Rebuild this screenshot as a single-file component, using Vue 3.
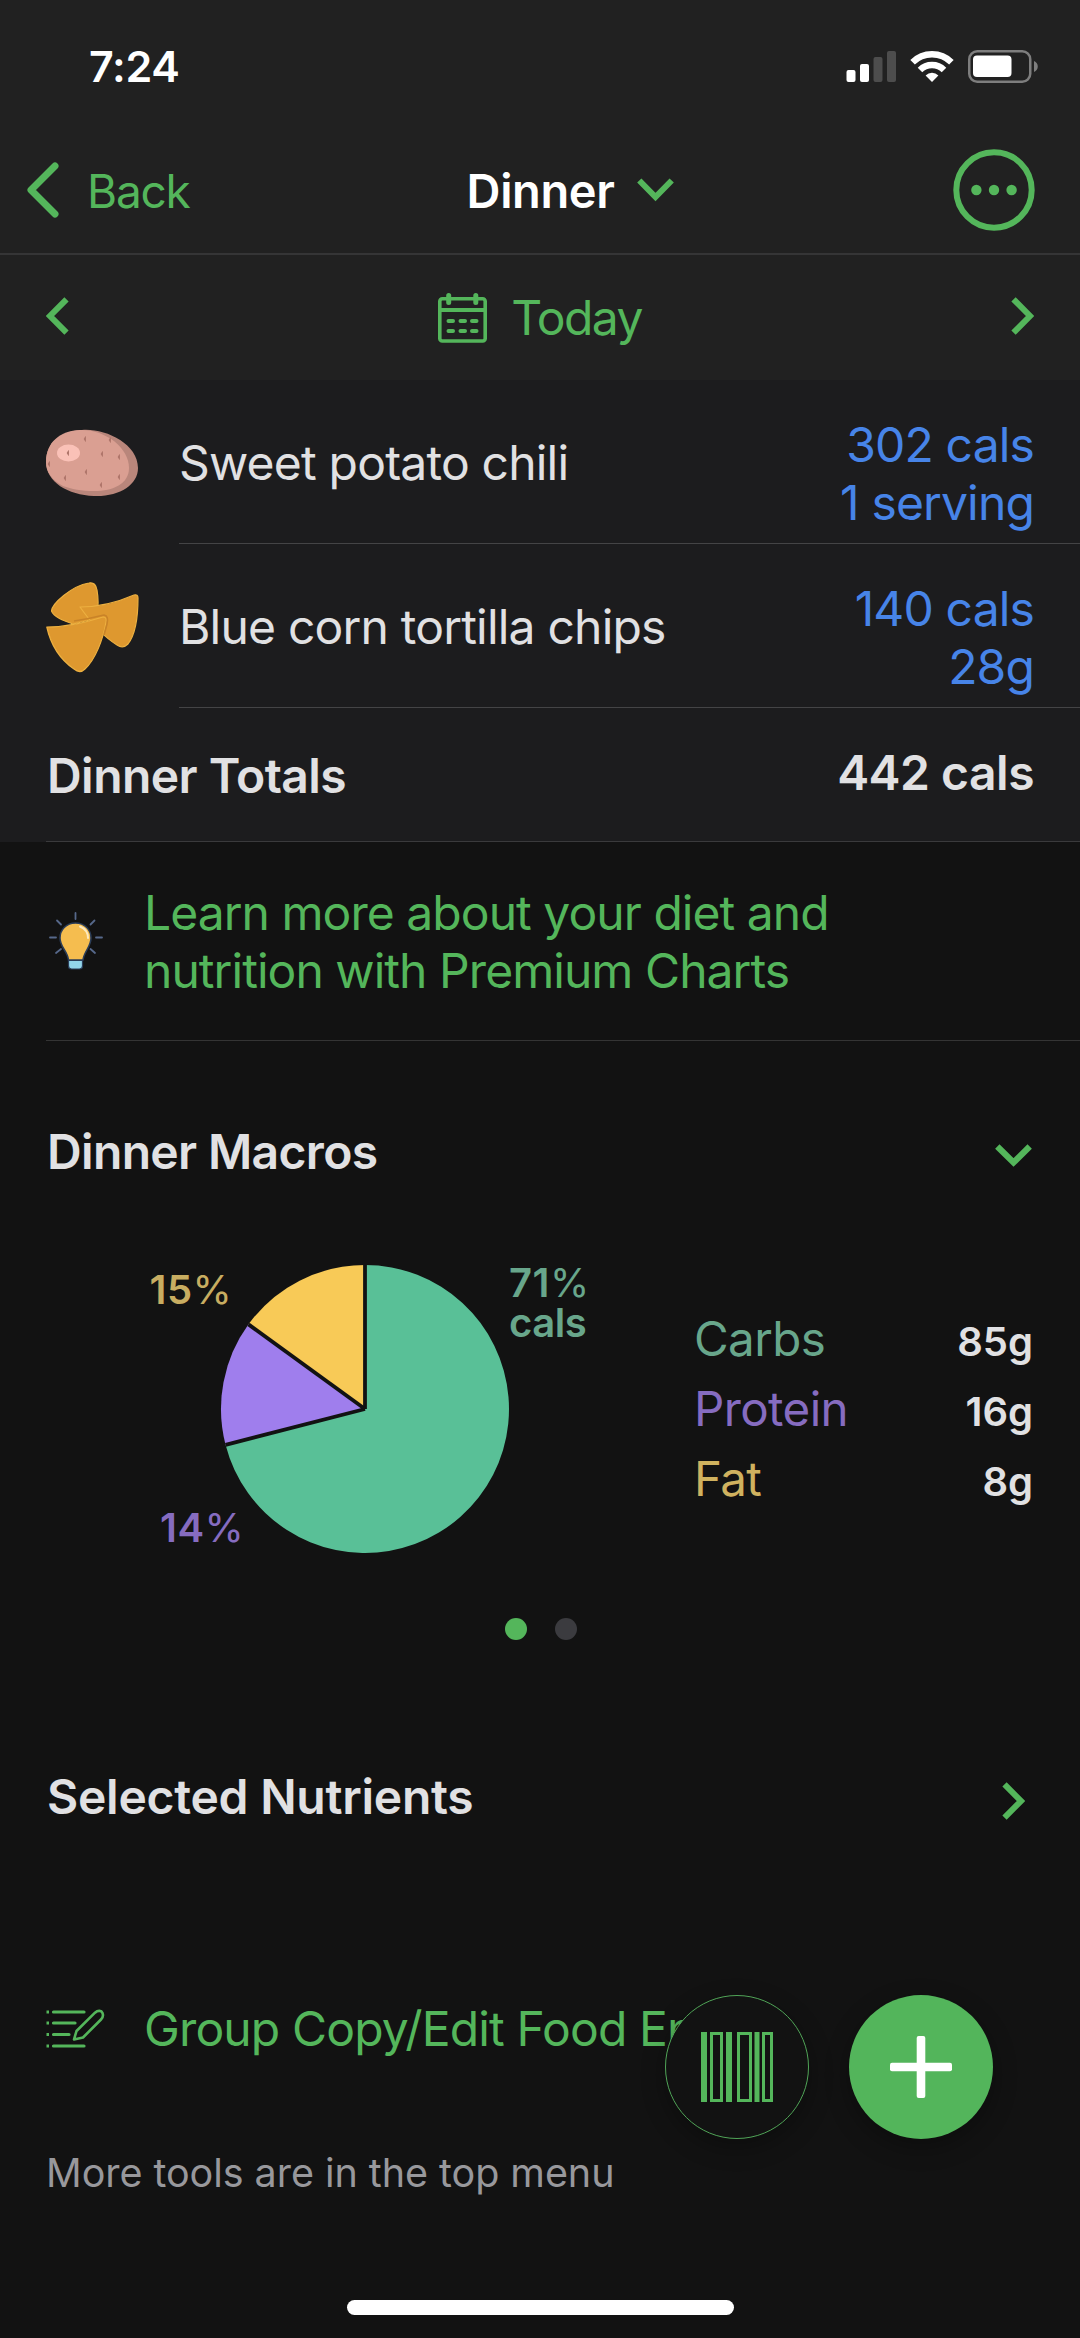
<template>
  <div class="screen">
    <header class="header">
      <div class="status-bar">
        <span class="time">7:24</span>
        <div class="status-icons">
          <svg width="50" height="32" viewBox="0 0 50 32">
            <rect x="0.5" y="20" width="9" height="12" rx="2" fill="#fff" />
            <rect x="14" y="14" width="9" height="18" rx="2" fill="#fff" />
            <rect x="27.5" y="7" width="9" height="25" rx="2" fill="#4d4d4d" />
            <rect x="41" y="1" width="9" height="31" rx="2" fill="#4d4d4d" />
          </svg>
          <svg width="44" height="32" viewBox="0 0 44 32">
            <g fill="none" stroke="#fff" stroke-width="6.4">
              <path d="M2.6 12.2 A27.5 27.5 0 0 1 41.4 12.2" />
              <path d="M10 20 A17 17 0 0 1 34 20" />
            </g>
            <path d="M22 32 L15.6 25.4 A9.2 9.2 0 0 1 28.4 25.4 Z" fill="#fff" />
          </svg>
          <svg width="71" height="33" viewBox="0 0 71 33">
            <rect x="1.25" y="1.25" width="61" height="30.5" rx="8" fill="none" stroke="#7e7e7e" stroke-width="2.5" />
            <rect x="5" y="5.5" width="38.5" height="21.5" rx="4" fill="#fff" />
            <path d="M66 11 C71 13 71 20 66 22 Z" fill="#7e7e7e" />
          </svg>
        </div>
      </div>

      <nav class="nav">
        <div class="back">
          <svg width="34" height="60" viewBox="0 0 34 60">
            <path d="M29 6 L5 30 L29 54" fill="none" stroke="#54b65b" stroke-width="7" stroke-linecap="round" stroke-linejoin="round" />
          </svg>
          <span class="back-label">Back</span>
        </div>
        <div class="title">
          <span class="title-label">Dinner</span>
          <svg width="37" height="24" viewBox="0 0 37 24">
            <path d="M2.3 2.5 L18.5 19 L34.7 2.5" fill="none" stroke="#54b65b" stroke-width="6" />
          </svg>
        </div>
        <svg class="more" width="82" height="82" viewBox="0 0 82 82">
          <circle cx="41" cy="41" r="37.7" fill="none" stroke="#54b65b" stroke-width="6" />
          <circle v-for="x in [23.4, 41, 58.6]" :key="x" :cx="x" cy="41" r="5.2" fill="#54b65b" />
        </svg>
      </nav>

      <div class="date-row">
        <svg class="day-arrow" width="23" height="38" viewBox="0 0 23 38">
          <path d="M20.5 2.3 L4 19 L20.5 35.7" fill="none" stroke="#54b65b" stroke-width="6" />
        </svg>
        <div class="today">
          <svg width="49" height="50" viewBox="0 0 49 50" fill="none" stroke="#54b65b">
            <rect x="1.8" y="5.8" width="45.4" height="42.2" rx="2.5" stroke-width="3.6" />
            <path d="M2 17 H47" stroke-width="4" />
            <path d="M10.7 2.5 V9.5 M37.8 2.5 V9.5" stroke-width="5" stroke-linecap="round" />
            <path d="M10.5 28 H15 M22.5 28 H27 M34 28 H38.5 M10.5 38 H15 M22.5 38 H27 M34 38 H38.5" stroke-width="4" stroke-linecap="round" />
          </svg>
          <span class="today-label">Today</span>
        </div>
        <svg class="day-arrow" width="23" height="38" viewBox="0 0 23 38">
          <path d="M2.5 2.3 L19 19 L2.5 35.7" fill="none" stroke="#54b65b" stroke-width="6" />
        </svg>
      </div>
    </header>

    <section class="foods">
      <div class="food" v-for="food in foods" :key="food.name">
        <div class="food-icon">
          <svg v-if="food.icon === 'potato'" width="93" height="68" viewBox="0 0 93 68">
            <path d="M36 1 C58 -1 92 14 92 39 C92 56 73 68 48 67 C22 66 0 53 0 33 C0 13 16 2 36 1 Z" fill="#b9867b" />
            <path d="M34 1 C58 0 83 18 83 39 C83 55 67 62 48 62 C36 62 25 60 17 57 C6 51 0 43 0 33 C0 13 14 2 34 1 Z" fill="#da9f92" />
            <ellipse cx="22.5" cy="24" rx="11.5" ry="8.5" fill="#fac1b7" />
            <path
              v-for="(s, i) in potatoSpots"
              :key="i"
              :d="`M${s[0] + 1} ${s[1] - 2.5} q-3.5 2.5 0 5`"
              fill="#b0766b"
              stroke="#b0766b"
              stroke-width="1"
            />
          </svg>
          <svg v-else class="chips" width="93" height="91" viewBox="0 0 93 91">
            <g fill="#de982f" stroke="#edb040" stroke-width="1.2" stroke-linejoin="round">
              <path d="M5.5 29 C6 22 25 4 43 1 C48 0 50 3 51 8 C53 20 52 31 48 37 L27 42 C16 38 8 35 5.5 29 Z" />
              <path d="M34 25 C56 25 72 20 88 13 Q92 12 92 16 C92 36 89 53 82 62 Q77 67 71 63 C58 55 46 42 34 25 Z" />
              <path d="M0.8 45 C22 45 40 40 57 35 Q61 35 60 40 C57 58 49 78 39 87 Q34 92 28 87 C15 78 5 64 0.8 45 Z" />
            </g>
            <path d="M28 39 Q42 37 58 33 Q63 34 61 42 L58 53" fill="none" stroke="#c98328" stroke-width="1.6" />
          </svg>
        </div>
        <div class="food-body">
          <span class="food-name">{{ food.name }}</span>
          <div class="food-amount">
            <div>{{ food.cals }}</div>
            <div>{{ food.amount }}</div>
          </div>
        </div>
      </div>
      <div class="totals">
        <span class="totals-label">Dinner Totals</span>
        <span class="totals-value">442 cals</span>
      </div>
    </section>

    <section class="premium">
      <svg width="54" height="58" viewBox="0 0 54 58">
        <path
          d="M26.5 1 V7 M8 8.5 L12 12.5 M45.5 8.5 L41.5 12.5 M1 25.5 H7 M47 25.5 H53 M7 41 L12 37 M46 41 L41.5 37"
          stroke="#56688a"
          stroke-width="1.8"
          stroke-linecap="round"
        />
        <path d="M26.5 11 C36 11 42 18 42 26 C42 35 35 39 34 48 H19.5 C18.5 39 11 35 11 26 C11 18 17 11 26.5 11 Z" fill="#f5bd4f" stroke="#2a3c57" stroke-width="1.5" />
        <path d="M31 14.5 C36 16.5 39 20 39 26" fill="none" stroke="#fdeac0" stroke-width="2" stroke-linecap="round" />
        <path d="M19.5 48.5 H33.5 V54 Q33.5 57 30.5 57 H22.5 Q19.5 57 19.5 54 Z" fill="#92d5ea" stroke="#2a3c57" stroke-width="1.2" />
      </svg>
      <p class="premium-text">Learn more about your diet and<br />nutrition with Premium Charts</p>
    </section>

    <section class="section-head macros-head">
      <h2 class="macros-title">Dinner Macros</h2>
      <svg class="chevron-down" width="37" height="24" viewBox="0 0 37 24">
        <path d="M2.3 2.5 L18.5 18.5 L34.7 2.5" fill="none" stroke="#54b65b" stroke-width="6.2" />
      </svg>
    </section>

    <section class="macros">
      <svg class="pie" width="600" height="296" viewBox="0 0 600 296">
        <path v-for="s in slices" :key="s.color" :d="s.path" :fill="s.color" />
        <path v-for="s in slices" :key="s.edge" :d="s.edge" stroke="#121212" stroke-width="3.8" />
        <g class="pie-text">
          <text x="149.5" y="43" fill="#c8ad61">15<tspan class="pct">%</tspan></text>
          <text x="160" y="281" fill="#866cc0">14<tspan class="pct">%</tspan></text>
          <text x="509" y="36" fill="#68a68b">71<tspan class="pct">%</tspan></text>
          <text x="509" y="76" fill="#68a68b" class="cals">cals</text>
        </g>
      </svg>
      <ul class="legend">
        <li v-for="m in macros" :key="m.name">
          <span :class="['macro-name', m.name.toLowerCase()]">{{ m.name }}</span>
          <span class="macro-grams">{{ m.grams }}</span>
        </li>
      </ul>
    </section>

    <div class="pager">
      <span class="dot active"></span>
      <span class="dot"></span>
    </div>

    <section class="section-head nutrients-head">
      <h2 class="nutrients-title">Selected Nutrients</h2>
      <svg class="chevron-right" width="23" height="38" viewBox="0 0 23 38">
        <path d="M2.5 2.3 L19 19 L2.5 35.7" fill="none" stroke="#54b65b" stroke-width="6" />
      </svg>
    </section>

    <section class="tools">
      <svg width="59" height="40" viewBox="0 0 59 40" fill="none" stroke="#54b65b" stroke-width="3.2">
        <path d="M0.5 3 H3 M0.5 14 H3 M0.5 25.5 H3 M0.5 37 H3" />
        <path d="M7.5 3 H38 M7.5 14 H29 M7.5 25.5 H23 M7.5 37 H38" stroke-linecap="round" />
        <path d="M28 30.5 L30.5 22 L49 3.7 C52 1 55.5 1.5 56.5 4 C57.5 6.5 57 8.5 55 10.5 L37 28.5 Z" stroke-width="2.6" stroke-linejoin="round" />
      </svg>
      <span class="tools-label">Group Copy/Edit Food Entries</span>
    </section>
    <p class="note">More tools are in the top menu</p>

    <footer class="home">
      <div class="home-bar"></div>
    </footer>

    <div class="fabs">
      <button class="fab scan">
        <svg width="73" height="70" viewBox="0 0 73 70">
          <g fill="#54b65b">
            <rect x="0" y="0" width="6" height="70" />
            <rect x="25" y="0" width="6" height="70" />
            <rect x="53.5" y="0" width="5" height="70" />
          </g>
          <g fill="none" stroke="#54b65b" stroke-width="3">
            <rect x="10.5" y="1.5" width="10" height="67" />
            <rect x="37.5" y="1.5" width="12" height="67" />
            <rect x="62.5" y="1.5" width="8" height="67" />
          </g>
        </svg>
      </button>
      <button class="fab add">
        <svg width="62" height="62" viewBox="0 0 62 62" fill="#fff">
          <rect x="0" y="26.7" width="62" height="8.6" rx="2" />
          <rect x="26.7" y="0" width="8.6" height="62" rx="2" />
        </svg>
      </button>
    </div>
  </div>
</template>

<script setup>
const foods = [
  { name: 'Sweet potato chili', icon: 'potato', cals: '302 cals', amount: '1 serving' },
  { name: 'Blue corn tortilla chips', icon: 'chips', cals: '140 cals', amount: '28g' },
]

const potatoSpots = [
  [39, 10], [64, 11], [22, 24], [56, 25], [73, 28], [3, 35], [40, 43], [19, 49], [73, 48], [55, 56],
]

const macros = [
  { name: 'Carbs', grams: '85g', percent: 71, color: '#59c097' },
  { name: 'Protein', grams: '16g', percent: 14, color: '#9f7eed' },
  { name: 'Fat', grams: '8g', percent: 15, color: '#f8ca57' },
]

const center = { x: 365, y: 148 }
const radius = 144

function pointAt(percent) {
  const angle = (percent / 100) * Math.PI * 2
  return `${center.x + radius * Math.sin(angle)} ${center.y - radius * Math.cos(angle)}`
}

let start = 0
const slices = macros.map((m) => {
  const end = start + m.percent
  const large = m.percent > 50 ? 1 : 0
  const origin = `M${center.x} ${center.y}`
  const path = `${origin} L${pointAt(start)} A${radius} ${radius} 0 ${large} 1 ${pointAt(end)} Z`
  const edge = `${origin} L${pointAt(start)}`
  start = end
  return { path, edge, color: m.color }
})
</script>

<style>
body {
  margin: 0;
  background: #121212;
}
</style>

<style scoped>
.screen {
  position: relative;
  width: 1080px;
  height: 2338px;
  overflow: hidden;
  box-sizing: border-box;
  background: #121212;
  color: #e1e1e3;
  font-family: Inter, "Liberation Sans", sans-serif;
  font-size: 48px;
  line-height: 58px;
  white-space: nowrap;
}

.screen * {
  box-sizing: border-box;
}

svg {
  display: block;
  flex: none;
}

h2,
p,
ul {
  margin: 0;
  padding: 0;
}

.header {
  background: #212121;
}

.status-bar {
  display: flex;
  justify-content: space-between;
  align-items: center;
  height: 127px;
  padding: 5px 41px 0 89px;
}

.time {
  padding-bottom: 1px;
  font-size: 43px;
  font-weight: 600;
  color: #fff;
  letter-spacing: -0.3px;
}

.status-icons {
  display: flex;
  align-items: center;
  gap: 14px;
}

.nav {
  display: grid;
  grid-template-columns: 1fr auto 1fr;
  align-items: center;
  height: 128px;
  padding: 0 45px 0 26px;
  border-bottom: 2px solid #353536;
}

.back {
  display: flex;
  align-items: center;
  gap: 27px;
  color: #54b65b;
}

.back-label {
  padding-top: 1px;
  font-size: 46px;
  letter-spacing: -1.2px;
}

.title {
  display: flex;
  align-items: center;
  gap: 23px;
  padding-left: 80px;
}

.title-label {
  padding-top: 1px;
  font-size: 47px;
  font-weight: 600;
  color: #fff;
  letter-spacing: -0.4px;
}

.more {
  justify-self: end;
}

.date-row {
  display: flex;
  justify-content: space-between;
  align-items: center;
  height: 125px;
  padding: 0 46px;
}

.day-arrow {
  margin-bottom: 3px;
}

.today {
  display: flex;
  align-items: center;
  gap: 24px;
  color: #54b65b;
}

.today-label {
  letter-spacing: -1.6px;
}

.foods {
  background: #1c1c1e;
}

.food {
  display: flex;
  height: 164px;
}

.food-icon {
  display: flex;
  align-items: center;
  width: 179px;
  padding: 2px 0 0 46px;
}

.food-body {
  display: flex;
  flex: 1;
  justify-content: space-between;
  align-items: center;
  padding-right: 46px;
  border-bottom: 1px solid #444446;
}

.food-name {
  padding-top: 2px;
  letter-spacing: -0.8px;
}

.food-amount {
  padding-top: 25px;
  line-height: 58.5px;
  color: #4784e8;
  text-align: right;
  letter-spacing: -0.85px;
}

.totals {
  display: flex;
  justify-content: space-between;
  align-items: center;
  height: 134px;
  margin-left: 46px;
  padding: 0 46px 0 1px;
  border-bottom: 1px solid #3a3a3c;
  font-weight: 600;
}

.totals-label {
  padding-top: 2px;
  letter-spacing: -0.55px;
}

.totals-value {
  padding-bottom: 4px;
  letter-spacing: -0.5px;
}

.premium {
  display: flex;
  align-items: center;
  gap: 41px;
  height: 199px;
  margin-left: 46px;
  padding-left: 3px;
  border-bottom: 1px solid #343434;
}

.premium-text {
  padding-top: 2px;
  color: #54b65b;
  letter-spacing: -0.95px;
}

.section-head {
  display: flex;
  justify-content: space-between;
  align-items: center;
  padding: 0 46px 0 47px;
}

.section-head h2 {
  font-size: 48px;
  font-weight: 600;
}

.macros-head {
  height: 220px;
}

.macros-title {
  padding-top: 2px;
  letter-spacing: -0.65px;
}

.chevron-down {
  margin: 10px 2px 0 0;
}

.macros {
  display: flex;
  align-items: center;
  height: 296px;
}

.pie {
  overflow: visible;
}

.pie-text {
  font-size: 40px;
  font-weight: 600;
  letter-spacing: 0.5px;
}

.pct {
  font-weight: 400;
}

.cals {
  letter-spacing: -0.5px;
}

.legend {
  flex: 1;
  padding: 0 47px 0 94px;
  list-style: none;
}

.legend li {
  display: flex;
  justify-content: space-between;
  align-items: baseline;
  height: 70px;
  line-height: 70px;
}

.macro-name {
  font-size: 47.5px;
  letter-spacing: -0.6px;
}

.carbs {
  color: #68a68b;
}

.protein {
  color: #866cc0;
}

.fat {
  color: #d0b25f;
}

.macro-grams {
  font-size: 40px;
  font-weight: 600;
}

.pager {
  display: flex;
  justify-content: center;
  align-items: center;
  gap: 28px;
  height: 144px;
  padding-left: 2px;
}

.dot {
  width: 22px;
  height: 22px;
  border-radius: 50%;
  background: #3b3b3f;
}

.dot.active {
  background: #54b65b;
}

.nutrients-head {
  height: 191px;
}

.nutrients-title {
  letter-spacing: -0.25px;
}

.chevron-right {
  margin: 9px 9px 0 0;
}

.tools {
  display: flex;
  align-items: center;
  gap: 39px;
  height: 73px;
  margin-top: 100px;
  padding-left: 46px;
  color: #54b65b;
}

.tools-label {
  letter-spacing: -0.85px;
}

.note {
  height: 214px;
  padding-left: 46px;
  line-height: 216px;
  font-size: 39.5px;
  color: #98989c;
  letter-spacing: -0.05px;
}

.home {
  display: flex;
  justify-content: center;
  align-items: center;
  height: 57px;
}

.home-bar {
  width: 387px;
  height: 15px;
  border-radius: 8px;
  background: #fff;
}

/* floating buttons sit over the tools list */
.fabs {
  position: absolute;
  right: 87px;
  bottom: 199px;
  display: flex;
  gap: 40px;
}

.fab {
  display: flex;
  justify-content: center;
  align-items: center;
  width: 144px;
  height: 144px;
  padding: 0;
  border: none;
  border-radius: 50%;
  box-shadow: 0 8px 24px rgba(0, 0, 0, 0.3);
}

.scan {
  border: 1.5px solid #50a457;
  background: #121212;
}

.add {
  background: #53b55b;
}
</style>
